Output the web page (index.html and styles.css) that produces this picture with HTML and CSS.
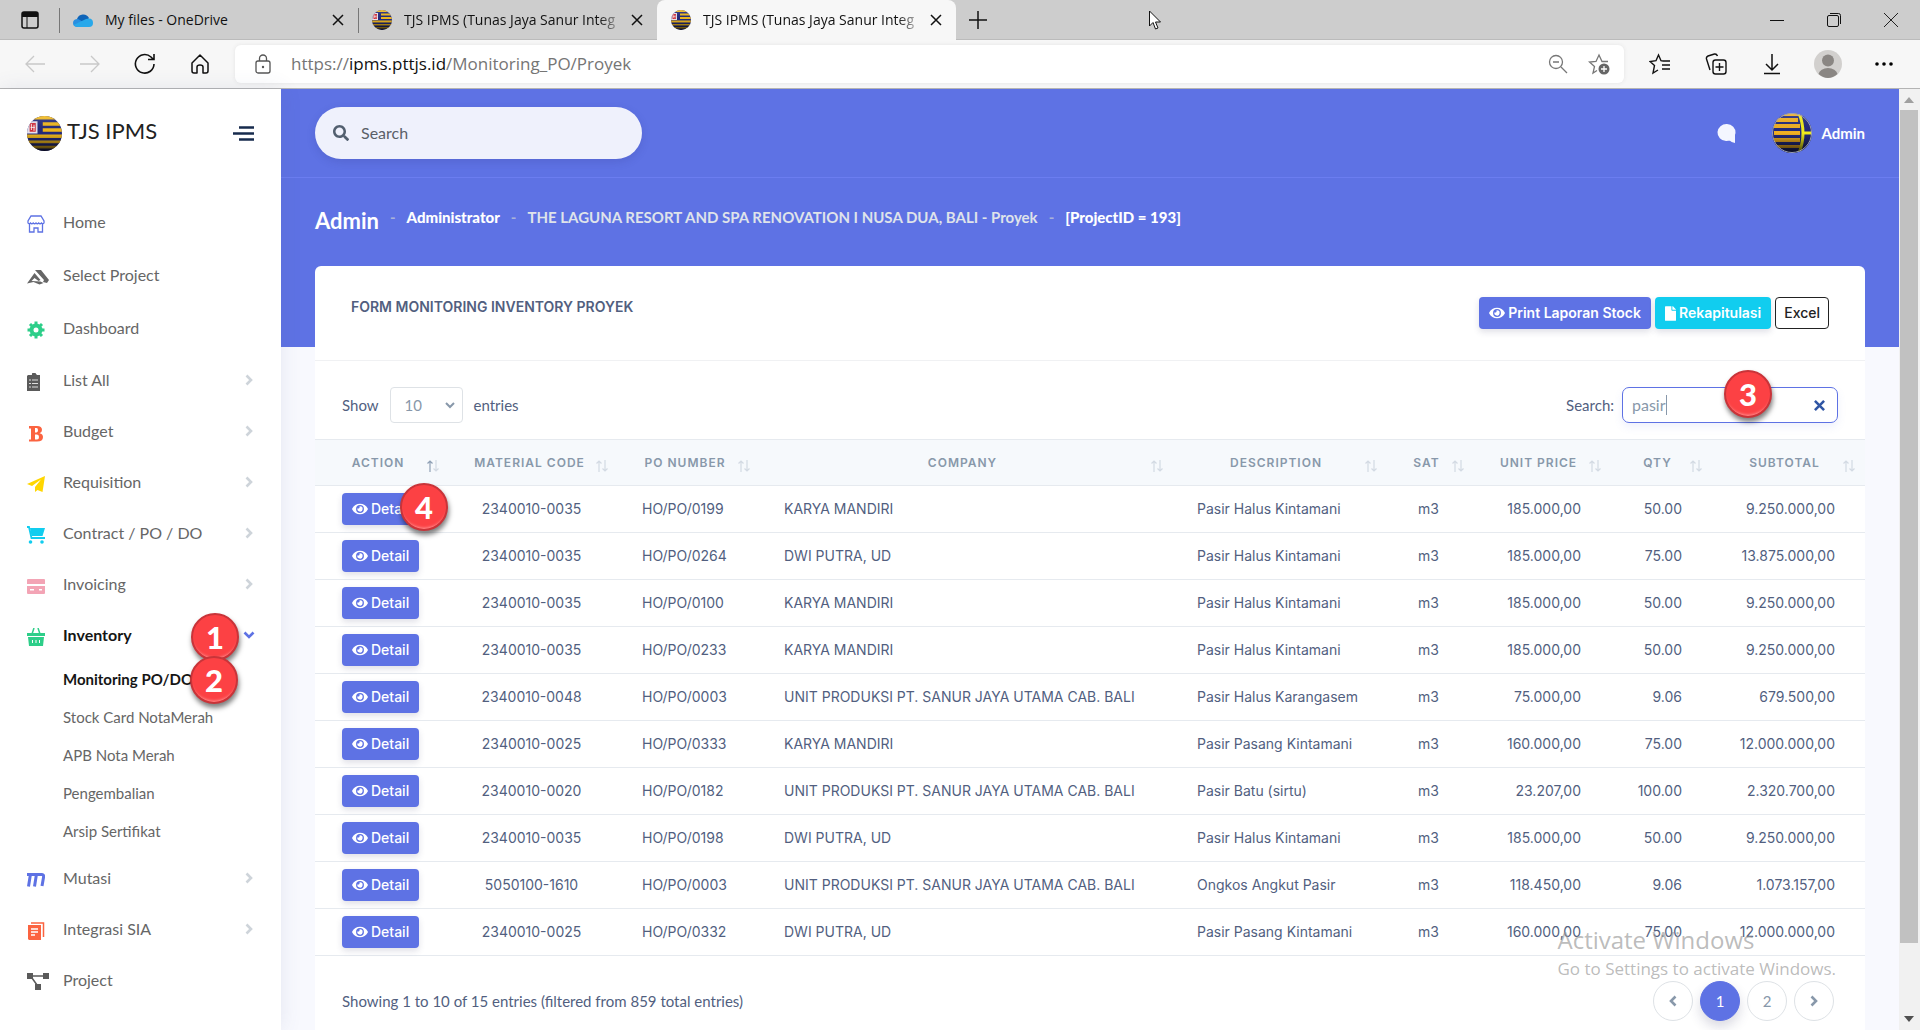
FILE: index.html
```html
<!DOCTYPE html>
<html lang="id">
<head>
<meta charset="utf-8">
<title>TJS IPMS (Tunas Jaya Sanur Integrated)</title>
<link rel="stylesheet" href="styles.css">
</head>
<body>
<svg class="defs" aria-hidden="true">
  <defs>
    <linearGradient id="shade" x1="0" y1="0" x2="0" y2="1"><stop offset="0" stop-color="#fff" stop-opacity=".15"/><stop offset=".5" stop-color="#000" stop-opacity="0"/><stop offset="1" stop-color="#000" stop-opacity=".75"/></linearGradient>
    <clipPath id="ball"><circle cx="20" cy="20" r="20"/></clipPath>
  </defs>
  <symbol id="globe" viewBox="0 0 40 40"><g clip-path="url(#ball)"><path fill="#232a7c" d="M0 0h40v40H0z"/><path fill="#f2b91d" d="M0 0h40v4H0zM18 7h22v4H18zM18 14h22v4H18zM0 21h40v4H0zM0 28h40v3H0zM0 34h40v3H0z"/><path fill="#e8e3ee" d="M0 6h12v14H0z"/><path fill="#d3303d" d="M3 8h7v10H3z"/><path stroke="#fff" d="M5 9v7M8 10v7M4 13h5"/><path fill="url(#shade)" d="M0 0h40v40H0z"/></g></symbol>
  <symbol id="globe2" viewBox="0 0 40 40"><g clip-path="url(#ball)"><path fill="#232a7c" d="M0 0h40v40H0z"/><path fill="#f2b023" d="M0 0h40v3H0zM4 5h22v4H4zM2 11h26v4H2zM2 18h26v4H2zM2 25h26v4H2zM4 32h24v3H4z"/><path fill="none" stroke="#f3ee1c" stroke-width="3" d="M27 0q8 20 0 40M31 20h9"/><path fill="url(#shade)" d="M0 0h40v40H0z"/></g><circle cx="20" cy="20" r="19.500" fill="none" stroke="#9aa0b8"/></symbol>
  <symbol id="eye" viewBox="0 0 576 512"><path fill="currentColor" d="M572.52 241.4C518.29 135.59 410.93 64 288 64S57.68 135.64 3.48 241.41a32.35 32.35 0 0 0 0 29.19C57.71 376.41 165.07 448 288 448s230.32-71.64 284.52-177.41a32.35 32.35 0 0 0 0-29.19zM288 400a144 144 0 1 1 144-144 143.93 143.93 0 0 1-144 144zm0-240a95.31 95.31 0 0 0-25.31 3.79 47.85 47.85 0 0 1-66.9 66.9A95.78 95.78 0 1 0 288 160z"/></symbol>
  <symbol id="close" viewBox="0 0 12 12"><path d="M1 1l10 10M11 1L1 11" fill="none" stroke="currentColor" stroke-width="1.500"/></symbol>
  <symbol id="chev" viewBox="0 0 8 12"><path d="M1.500 1.500L6 6l-4.500 4.500" fill="none" stroke="currentColor" stroke-width="2.600"/></symbol>
  <symbol id="sort" viewBox="0 0 12 12"><path class="up" d="M3 12V1M.5 3.500L3 1l2.500 2.500" fill="none" stroke="currentColor" stroke-width="1.200"/><path d="M9 0v11M6.500 8.500L9 11l2.500-2.500" fill="none" stroke="#d3dae3" stroke-width="1.200"/></symbol>
</svg>

<header class="browser">
  <div class="tabstrip">
    <button class="tab-actions" aria-label="Tab actions"><svg width="18" height="18" viewBox="0 0 18 18"><rect x="1" y="1" width="16" height="16" rx="2" fill="none" stroke="#111" stroke-width="1.500"/><path fill="#111" d="M1 1h16v5H1z"/><path stroke="#111" d="M6 6v11"/></svg></button>
    <div class="tab sep"><svg width="20" height="16" viewBox="0 0 20 16"><path fill="#0f64b8" d="M4 7a6.500 6.500 0 0 1 12-1l-5 7H3z"/><path fill="#2a8fe0" d="M5 15q-5 0-5-4 0-4 5-4l7 4z"/><path fill="#28a8ea" d="M5 15q-3 0-4.500-2L13 7q7-2 7 4 0 4-4 4z"/></svg><span class="tab-title">My files - OneDrive</span><button aria-label="Close tab"><svg width="12" height="12"><use href="#close"/></svg></button></div>
    <div class="tab sep"><svg width="20" height="20"><use href="#globe"/></svg><span class="tab-title fade">TJS IPMS (Tunas Jaya Sanur Integ</span><button aria-label="Close tab"><svg width="12" height="12"><use href="#close"/></svg></button></div>
    <div class="tab active"><svg width="20" height="20"><use href="#globe"/></svg><span class="tab-title fade">TJS IPMS (Tunas Jaya Sanur Integ</span><button aria-label="Close tab"><svg width="12" height="12"><use href="#close"/></svg></button></div>
    <button class="new-tab" aria-label="New tab"><svg width="18" height="18" viewBox="0 0 18 18"><path d="M9 0v18M0 9h18" stroke="#111" stroke-width="1.500"/></svg></button>
    <div class="win-controls">
      <button aria-label="Minimize"><svg width="14" height="14" viewBox="0 0 14 14"><path d="M0 7.500h14" stroke="#111"/></svg></button>
      <button aria-label="Restore"><svg width="14" height="14" viewBox="0 0 14 14"><rect x=".5" y="2.500" width="11" height="11" rx="1.500" fill="none" stroke="#111"/><path d="M3 .5h8.500q2 0 2 2V11" fill="none" stroke="#111"/></svg></button>
      <button aria-label="Close"><svg width="14" height="14" viewBox="0 0 14 14"><path d="M0 0l14 14M14 0L0 14" stroke="#222"/></svg></button>
    </div>
  </div>
  <div class="toolbar">
    <div class="nav-buttons">
      <button aria-label="Back"><svg width="20" height="20" viewBox="0 0 20 20"><path d="M20 10H1M9 2l-8 8 8 8" fill="none" stroke="#c9c9c9" stroke-width="1.300"/></svg></button>
      <button aria-label="Forward"><svg width="20" height="20" viewBox="0 0 20 20"><path d="M0 10h19M11 2l8 8-8 8" fill="none" stroke="#c9c9c9" stroke-width="1.300"/></svg></button>
      <button aria-label="Refresh"><svg width="22" height="22" viewBox="0 0 22 22"><path d="M20 11a9.300 9.300 0 1 1-3-7l2 2M20 1v5.500h-6" fill="none" stroke="#111" stroke-width="1.600"/></svg></button>
      <button aria-label="Home"><svg width="20" height="20" viewBox="0 0 20 20"><path d="M2 9l8-8 8 8v8q0 2-2 2h-3v-6q0-2-3-2t-3 2v6H4q-2 0-2-2z" fill="none" stroke="#111" stroke-width="1.500" stroke-linejoin="round"/></svg></button>
    </div>
    <div class="address">
      <svg width="16" height="20" viewBox="0 0 16 20"><rect x="1" y="7" width="14" height="12" rx="2" fill="none" stroke="#555" stroke-width="1.300"/><path d="M4.500 7V4.500a3.500 3.500 0 0 1 7 0V7" fill="none" stroke="#555" stroke-width="1.300"/><circle cx="8" cy="13" r="1.200" fill="#555"/></svg>
      <span class="url">https://<b>ipms.pttjs.id</b>/Monitoring_PO/Proyek</span>
      <button aria-label="Zoom"><svg width="20" height="20" viewBox="0 0 20 20"><circle cx="8" cy="8" r="6.500" fill="none" stroke="#777" stroke-width="1.300"/><path d="M5 8h6M13 13l6 6" stroke="#777" stroke-width="1.300"/></svg></button>
      <button aria-label="Add favorite"><svg width="22" height="22" viewBox="0 0 22 22"><path d="M20 8.500h-6L11 2 8 8.500 1.500 9l5 4.500L5 20l4-2.500" fill="none" stroke="#777" stroke-width="1.300"/><circle cx="16" cy="16" r="5.500" fill="#666"/><path d="M16 13v6M13 16h6" stroke="#fff" stroke-width="1.300"/></svg></button>
    </div>
    <div class="tools">
      <button aria-label="Favorites"><svg width="22" height="22" viewBox="0 0 22 22"><path d="M14 8l-2-.3L9.500 2 7 7.700 1 8.500l4.500 4L4 20l5-3" fill="none" stroke="#111" stroke-width="1.400"/><path d="M14 8h7M13 12h8M13 16h8" stroke="#111" stroke-width="1.500"/></svg></button>
      <button aria-label="Collections"><svg width="22" height="22" viewBox="0 0 22 22"><rect x="8" y="7" width="13" height="14" rx="2.500" fill="none" stroke="#111" stroke-width="1.400"/><path d="M14.500 10v8M10.500 14h8M5 17L1.500 6q-.6-2 1.500-3L9.500 1q2-.4 3 2" fill="none" stroke="#111" stroke-width="1.400"/></svg></button>
      <button aria-label="Downloads"><svg width="20" height="22" viewBox="0 0 20 22"><path d="M10 1v15M4 11l6 6 6-6M2 20.500h16" fill="none" stroke="#111" stroke-width="1.500"/></svg></button>
      <button aria-label="Profile"><svg width="28" height="28" viewBox="0 0 28 28"><circle cx="14" cy="14" r="14" fill="#d2d0ce"/><circle cx="14" cy="10.500" r="6" fill="#8a8683"/><path d="M4.500 24a9.600 7 0 0 1 19 0Q14 32 4.500 24z" fill="#8a8683"/></svg></button>
      <button aria-label="Settings"><svg width="18" height="4" viewBox="0 0 18 4"><circle cx="2" cy="2" r="1.800"/><circle cx="9" cy="2" r="1.800"/><circle cx="16" cy="2" r="1.800"/></svg></button>
    </div>
  </div>
</header>

<div class="page">
  <aside class="sidebar">
    <div class="brand"><svg width="35" height="35"><use href="#globe"/></svg><span>TJS IPMS</span><button aria-label="Toggle menu"><svg width="21" height="15" viewBox="0 0 21 15"><path d="M6 1.500h15M0 7.500h21M6 13.500h15" stroke="#172b4d" stroke-width="2.500"/></svg></button></div>
    <ul class="links">
      <li><a href="#"><svg viewBox="0 0 18 18"><path d="M4 1h10l3 5v2q-1 1.500-2.500 0-1.500 1.500-2.800 0-1.400 1.500-2.700 0-1.500 1.500-2.800 0-1.500 1.500-2.700 0Q2 9.500 1 8V6zM2.500 9v8h4.500v-4h4v4h4.500V9" fill="none" stroke="#5e72e4" stroke-width="1.300"/></svg>Home</a></li>
      <li><a href="#"><svg class="wide" viewBox="0 0 22 18"><path fill="#666" d="M8 2h6l8 10-2 3-4-1 1-2zM7.500 5l6 7-2 1-4-3-3 3 9 .5 3 1.500-4 1.500-6-2.500L0 15.500z"/></svg>Select Project</a></li>
      <li><a href="#"><svg viewBox="0 0 18 18"><circle cx="9" cy="9" r="4.500" fill="none" stroke="#2dce89" stroke-width="4"/><path d="M9 .5v4M9 14v3.500M.5 9H4M14 9h3.500M3 3l2.500 2.500M15 3l-2.500 2.500M3 15l2.500-2.500M15 15l-2.500-2.500" stroke="#2dce89" stroke-width="3"/></svg>Dashboard</a></li>
    </ul>
    <ul class="groups">
      <li><a href="#"><svg viewBox="0 0 18 18"><path fill="#5a5a5a" d="M1 2h4a2 2 0 0 1 4-1 2 2 0 0 1 1 1h3v16H0V3z"/><path d="M2 7h2M5 7h6M2 10.500h2M5 10.500h6M2 14h2M5 14h6" stroke="#ddd" stroke-width="1.200"/></svg>List All<svg class="caret" viewBox="0 0 8 12"><use href="#chev"/></svg></a></li>
      <li><a href="#"><svg viewBox="0 0 18 18"><path fill="#fb6340" fill-rule="evenodd" d="M2 2h8q5 0 5 4 0 2.500-2.500 3.200Q16 10 16 13q0 4.500-6 4.500H2v-2h2v-11H2zm6 2v4.500h1.500Q11 8 11 6.200 11 4 9.500 4zm0 6.500v5h2q2 0 2-2.500t-2-2.500z"/></svg>Budget<svg class="caret" viewBox="0 0 8 12"><use href="#chev"/></svg></a></li>
      <li><a href="#"><svg viewBox="0 0 18 18"><path fill="#ffd600" d="M18 1l-2.500 16-5-2L8 17v-5l6-7.500L5 11 0 9z"/></svg>Requisition<svg class="caret" viewBox="0 0 8 12"><use href="#chev"/></svg></a></li>
      <li><a href="#"><svg viewBox="0 0 18 18"><path d="M0 1h2l2.500 11H18" fill="none" stroke="#11cdef" stroke-width="1.800"/><path fill="#11cdef" d="M3 2h15l-2.500 8H4.500z"/><circle cx="3.500" cy="16" r="1.800" fill="#11cdef"/><circle cx="15" cy="16" r="1.800" fill="#11cdef"/></svg>Contract / PO / DO<svg class="caret" viewBox="0 0 8 12"><use href="#chev"/></svg></a></li>
      <li><a href="#"><svg viewBox="0 0 18 18"><path fill="#f3a4b5" fill-rule="evenodd" d="M1 2h16q1 0 1 1v4H0V3q0-1 1-1zM0 9h18v7q0 1-1 1H1q-1 0-1-1zm3 3v1.500h4V12zm9 0v1.500h3V12z"/></svg>Invoicing<svg class="caret" viewBox="0 0 8 12"><use href="#chev"/></svg></a></li>
      <li class="open"><a href="#"><svg viewBox="0 0 18 18"><path d="M7 0L5 6M11 0l2 6" stroke="#2dce89" stroke-width="1.500"/><path fill="#2dce89" fill-rule="evenodd" d="M0 5h18v3H0zm1 4h16l-1 9H2zm4 3v3h1v-3zm3.500 0v3h1v-3zm3.500 0v3h1v-3z"/></svg>Inventory<svg class="caret down" viewBox="0 0 8 12"><use href="#chev"/></svg></a><span class="step step-1">1</span>
        <ul class="sub">
          <li class="current"><a href="#">Monitoring PO/DO</a><span class="step step-2">2</span></li>
          <li><a href="#">Stock Card NotaMerah</a></li>
          <li><a href="#">APB Nota Merah</a></li>
          <li><a href="#">Pengembalian</a></li>
          <li><a href="#">Arsip Sertifikat</a></li>
        </ul></li>
      <li><a href="#"><svg viewBox="0 0 18 18"><path d="M0 3.500h15q2 0 1.500 3L15 15M3.500 3L1.500 15.500M9.500 3L7.500 15.500" fill="none" stroke="#5e72e4" stroke-width="3"/></svg>Mutasi<svg class="caret" viewBox="0 0 8 12"><use href="#chev"/></svg></a></li>
      <li><a href="#"><svg viewBox="0 0 18 18"><path d="M4 1h12.500v14" fill="none" stroke="#fb6340" stroke-width="1.500"/><path fill="#fb6340" d="M1 3h13v15H2l-1-1z"/><path d="M4 7h7M4 10h7M4 13h4" stroke="#fff" stroke-width="1.300"/></svg>Integrasi SIA<svg class="caret" viewBox="0 0 8 12"><use href="#chev"/></svg></a></li>
      <li><a href="#"><svg class="wide" viewBox="0 0 22 18"><path fill="#5a5a5a" d="M0 0h6v6H0zM16 0h6v6h-6zM8 11h6v6H8z"/><path d="M6 3h10M5 5l5 7" stroke="#5a5a5a" stroke-width="1.500"/></svg>Project</a></li>
    </ul>
  </aside>

  <main class="main">
    <nav class="topbar">
      <label class="search"><svg width="16" height="16" viewBox="0 0 512 512"><path fill="#525f6f" d="M505 442.700L405.300 343c-4.500-4.500-10.600-7-17-7H372c27.600-35.300 44-79.700 44-128C416 93.100 322.900 0 208 0S0 93.100 0 208s93.100 208 208 208c48.300 0 92.700-16.400 128-44v16.300c0 6.400 2.500 12.500 7 17l99.700 99.700c9.400 9.400 24.600 9.400 33.900 0l28.300-28.300c9.400-9.400 9.400-24.600.1-34zM208 336c-70.700 0-128-57.200-128-128 0-70.700 57.200-128 128-128 70.700 0 128 57.200 128 128 0 70.700-57.200 128-128 128z"/></svg><input type="text" placeholder="Search" aria-label="Search"></label>
      <button class="chat" aria-label="Messages"><svg width="20" height="20" viewBox="0 0 20 20"><path fill="#f4f6ff" d="M10 1a9 8.500 0 1 1-1 17A9 8.500 0 0 1 10 1zM12 16l6-4v8q-3 0-6-3z"/></svg></button>
      <a class="user" href="#"><svg width="40" height="40"><use href="#globe2"/></svg>Admin</a>
    </nav>
    <div class="crumbs"><h1>Admin</h1><span class="dash">-</span><strong>Administrator</strong><span class="dash">-</span><span class="project">THE LAGUNA RESORT AND SPA RENOVATION I NUSA DUA, BALI - Proyek</span><span class="dash">-</span><strong>[ProjectID = 193]</strong></div>

    <section class="card">
      <div class="card-head">
        <h2>FORM MONITORING INVENTORY PROYEK</h2>
        <div class="actions">
          <button class="btn primary bold"><svg width="16" height="14"><use href="#eye"/></svg>Print Laporan Stock</button>
          <button class="btn info bold"><svg width="11" height="15" viewBox="0 0 384 512"><path fill="#fff" d="M224 136V0H24C10.700 0 0 10.700 0 24v464c0 13.300 10.700 24 24 24h336c13.300 0 24-10.700 24-24V160H248c-13.200 0-24-10.800-24-24zm160-14.100v6.100H256V0h6.100c6.400 0 12.500 2.500 17 7l97.900 98c4.500 4.500 7 10.600 7 16.900z"/></svg>Rekapitulasi</button>
          <button class="btn outline">Excel</button>
        </div>
      </div>
      <div class="filters">
        <label class="length">Show <select><option>10</option></select> entries</label>
        <div class="find"><label for="q">Search:</label><div class="find-box"><input id="q" type="text" value="pasir"><button aria-label="Clear"><svg width="11" height="11" viewBox="0 0 12 12"><path d="M1 1l10 10M11 1L1 11" stroke="#2f55a4" stroke-width="2.800"/></svg></button><span class="step step-3">3</span></div></div>
      </div>
      <table>
        <colgroup><col class="c-action"><col class="c-code"><col class="c-po"><col><col class="c-desc"><col class="c-sat"><col class="c-price"><col class="c-qty"><col class="c-sub"></colgroup>
        <thead><tr>
          <th class="sorted">Action<svg><use href="#sort"/></svg></th><th>Material Code<svg><use href="#sort"/></svg></th><th>PO Number<svg><use href="#sort"/></svg></th><th>Company<svg><use href="#sort"/></svg></th><th>Description<svg><use href="#sort"/></svg></th><th>Sat<svg><use href="#sort"/></svg></th><th>Unit Price<svg><use href="#sort"/></svg></th><th>Qty<svg><use href="#sort"/></svg></th><th>Subtotal<svg><use href="#sort"/></svg></th>
        </tr></thead>
        <tbody>
          <tr><td><span class="anchor"><button class="btn primary"><svg width="16" height="14"><use href="#eye"/></svg>Detail</button><span class="step step-4">4</span></span></td><td>2340010-0035</td><td>HO/PO/0199</td><td>KARYA MANDIRI</td><td>Pasir Halus Kintamani</td><td>m3</td><td>185.000,00</td><td>50.00</td><td>9.250.000,00</td></tr>
          <tr><td><button class="btn primary"><svg width="16" height="14"><use href="#eye"/></svg>Detail</button></td><td>2340010-0035</td><td>HO/PO/0264</td><td>DWI PUTRA, UD</td><td>Pasir Halus Kintamani</td><td>m3</td><td>185.000,00</td><td>75.00</td><td>13.875.000,00</td></tr>
          <tr><td><button class="btn primary"><svg width="16" height="14"><use href="#eye"/></svg>Detail</button></td><td>2340010-0035</td><td>HO/PO/0100</td><td>KARYA MANDIRI</td><td>Pasir Halus Kintamani</td><td>m3</td><td>185.000,00</td><td>50.00</td><td>9.250.000,00</td></tr>
          <tr><td><button class="btn primary"><svg width="16" height="14"><use href="#eye"/></svg>Detail</button></td><td>2340010-0035</td><td>HO/PO/0233</td><td>KARYA MANDIRI</td><td>Pasir Halus Kintamani</td><td>m3</td><td>185.000,00</td><td>50.00</td><td>9.250.000,00</td></tr>
          <tr><td><button class="btn primary"><svg width="16" height="14"><use href="#eye"/></svg>Detail</button></td><td>2340010-0048</td><td>HO/PO/0003</td><td>UNIT PRODUKSI PT. SANUR JAYA UTAMA CAB. BALI</td><td>Pasir Halus Karangasem</td><td>m3</td><td>75.000,00</td><td>9.06</td><td>679.500,00</td></tr>
          <tr><td><button class="btn primary"><svg width="16" height="14"><use href="#eye"/></svg>Detail</button></td><td>2340010-0025</td><td>HO/PO/0333</td><td>KARYA MANDIRI</td><td>Pasir Pasang Kintamani</td><td>m3</td><td>160.000,00</td><td>75.00</td><td>12.000.000,00</td></tr>
          <tr><td><button class="btn primary"><svg width="16" height="14"><use href="#eye"/></svg>Detail</button></td><td>2340010-0020</td><td>HO/PO/0182</td><td>UNIT PRODUKSI PT. SANUR JAYA UTAMA CAB. BALI</td><td>Pasir Batu (sirtu)</td><td>m3</td><td>23.207,00</td><td>100.00</td><td>2.320.700,00</td></tr>
          <tr><td><button class="btn primary"><svg width="16" height="14"><use href="#eye"/></svg>Detail</button></td><td>2340010-0035</td><td>HO/PO/0198</td><td>DWI PUTRA, UD</td><td>Pasir Halus Kintamani</td><td>m3</td><td>185.000,00</td><td>50.00</td><td>9.250.000,00</td></tr>
          <tr><td><button class="btn primary"><svg width="16" height="14"><use href="#eye"/></svg>Detail</button></td><td>5050100-1610</td><td>HO/PO/0003</td><td>UNIT PRODUKSI PT. SANUR JAYA UTAMA CAB. BALI</td><td>Ongkos Angkut Pasir</td><td>m3</td><td>118.450,00</td><td>9.06</td><td>1.073.157,00</td></tr>
          <tr><td><button class="btn primary"><svg width="16" height="14"><use href="#eye"/></svg>Detail</button></td><td>2340010-0025</td><td>HO/PO/0332</td><td>DWI PUTRA, UD</td><td>Pasir Pasang Kintamani</td><td>m3</td><td>160.000,00</td><td>75.00</td><td>12.000.000,00</td></tr>
        </tbody>
      </table>
      <div class="card-foot">
        <span>Showing 1 to 10 of 15 entries (filtered from 859 total entries)</span>
        <div class="pager"><button aria-label="Previous"><svg class="flip" width="8" height="12"><use href="#chev"/></svg></button><button class="on">1</button><button>2</button><button aria-label="Next"><svg width="8" height="12"><use href="#chev"/></svg></button></div>
      </div>
    </section>
  </main>

  <div class="scrollbar"><svg width="10" height="6" viewBox="0 0 10 6"><path fill="#a0a0a0" d="M0 6l5-6 5 6z"/></svg><div class="thumb"></div><svg width="10" height="6" viewBox="0 0 10 6"><path fill="#505050" d="M0 0l5 6 5-6z"/></svg></div>
</div>

<div class="watermark"><p>Activate Windows</p><small>Go to Settings to activate Windows.</small></div>
<svg class="cursor" width="12" height="20" viewBox="0 0 12 20"><path d="M.5 1v15l3.500-3.500L6.500 19l2.500-1-2.500-6h5z" fill="#fff" stroke="#111"/></svg>
</body>
</html>
```
FILE: styles.css
```css
* { box-sizing: border-box; }
html, body { height: 100%; }
body {
  margin: 0;
  display: flex;
  flex-direction: column;
  overflow: hidden;
  position: relative;
  background: #f8f9fe;
  color: #525f7f;
  font: 15px/20px Lato, sans-serif;
}
button { font: inherit; color: inherit; background: none; border: 0; padding: 0; }
a { color: inherit; text-decoration: none; }
ul { list-style: none; margin: 0; padding: 0; }
svg { flex: none; display: block; }
.defs { position: absolute; width: 0; height: 0; }

/* Browser frame */
.browser { font: 14px/20px "Open Sans", sans-serif; color: #111; }
.tabstrip { display: flex; height: 40px; background: #cdcdcd; border-bottom: 1px solid #bbb; }
.tab-actions { width: 59px; display: flex; align-items: center; justify-content: center; }
.tab { width: 299px; height: 40px; padding: 0 14px; display: flex; align-items: center; gap: 12px; position: relative; }
.tab.sep::before { content: ""; position: absolute; left: 0; top: 8px; bottom: 7px; width: 1px; background: #777; }
.tab.active { background: #f7f7f7; border-radius: 8px 8px 0 0; }
.tab-title { flex: 1; min-width: 0; overflow: hidden; white-space: nowrap; }
.fade { -webkit-mask-image: linear-gradient(90deg, #000 88%, transparent); mask-image: linear-gradient(90deg, #000 88%, transparent); }
.tab button { margin-left: -6px; }
.new-tab { width: 44px; display: flex; align-items: center; justify-content: center; }
.win-controls { margin-left: auto; padding-right: 1px; display: flex; }
.win-controls button { width: 57px; display: flex; align-items: center; justify-content: center; }
.toolbar { display: flex; align-items: center; height: 49px; padding-left: 7px; background: #f7f7f7; border-bottom: 1px solid #b4b4b4; }
.nav-buttons, .tools { display: flex; }
.nav-buttons button, .tools button { width: 55px; display: flex; align-items: center; justify-content: center; }
.tools { padding: 0 8px; }
.tools button { width: 56px; }
.address { flex: 1; height: 38px; margin-left: 8px; padding: 0 14px 0 20px; display: flex; align-items: center; gap: 20px; background: #fff; border-radius: 6px; box-shadow: 0 0 4px #e4e4e4; }
.url { flex: 1; font-size: 17px; color: #757575; }
.url b { font-weight: 400; color: #111; }

/* Page frame */
.page { flex: 1; min-height: 0; display: flex; }
.sidebar { width: 281px; background: #fff; box-shadow: 0 0 20px rgba(80, 90, 140, .12); position: relative; z-index: 1; }
.brand { display: flex; align-items: center; gap: 5px; height: 106px; padding: 0 27px 18px; font-size: 22px; color: #222; }
.brand span { padding-bottom: 4px; }
.brand button { margin-left: auto; }
.sidebar li { position: relative; }
.sidebar a { display: flex; align-items: center; padding: 0 27px; color: #666; font-size: 16px; }
.sidebar a > svg { width: 18px; height: 18px; margin-right: 18px; position: relative; top: 2px; }
.sidebar a > svg.wide { width: 22px; margin-right: 14px; }
.sidebar a > svg.caret { width: 8px; height: 12px; margin: 0 1px 0 auto; top: 0; color: #ced4da; }
.sidebar a > svg.down { transform: rotate(90deg); color: #5e72e4; }
.links a { height: 53px; }
.groups > li > a { height: 51px; }
.sub { padding-bottom: 2px; }
.sidebar .sub a { height: 38px; padding-left: 63px; font-size: 15px; }
.sidebar .open > a, .sidebar .current a { color: #151515; font-weight: 700; }

.main { flex: 1; min-width: 0; display: flex; flex-direction: column; padding: 0 34px; background: linear-gradient(#5e72e4 258px, #f8f9fe 258px); }
.topbar { flex: none; display: flex; align-items: center; height: 89px; margin: 0 -34px; padding: 0 34px; border-bottom: 1px solid #6b7df0; }
.search { display: flex; align-items: center; gap: 12px; width: 327px; height: 52px; padding: 0 18px; border-radius: 26px; background: #eff1fc; box-shadow: 0 3px 8px rgba(50, 60, 140, .2); }
.search input { flex: 1; min-width: 0; border: 0; padding: 0; background: none; font: inherit; font-size: 16px; }
.search input::placeholder { color: #5a5f68; opacity: 1; }
.chat { margin-left: auto; margin-right: 35px; }
.user { display: flex; align-items: center; gap: 9px; color: #fff; font-weight: 700; }
.crumbs { flex: none; display: flex; align-items: center; gap: 11px; height: 88px; padding-bottom: 10px; color: #dfe3ea; font-size: 15px; font-weight: 700; white-space: nowrap; }
.crumbs strong, .crumbs h1 { color: #fff; }
.crumbs h1 { margin: 0; padding-top: 8px; font-size: 22px; line-height: 24px; }
.dash { color: #a9b2d8; }

/* Card */
.card { flex: 1; background: #fff; border-radius: 6px 6px 0 0; }
.card-head { display: flex; justify-content: space-between; height: 95px; padding: 31px 36px 0; border-bottom: 1px solid #f0f1f3; }
.card-head h2 { margin: 0; font: 600 14px/20px Inter, sans-serif; }
.actions { display: flex; gap: 4px; }
.btn { display: inline-flex; align-items: center; gap: 3px; height: 32px; padding: 0 10px; border: 1px solid #222; border-radius: 4px; font: 500 14px/20px Inter, sans-serif; color: #222; white-space: nowrap; }
.outline { padding: 0 8px; }
.primary, .info { color: #fff; border: 0; box-shadow: 0 3px 6px rgba(50, 50, 93, .15); }
.primary { background: #5e72e4; }
.info { background: #11cdef; }
.bold { font-weight: 600; }
.filters { display: flex; justify-content: space-between; align-items: center; height: 78px; padding: 10px 27px 0; }
.length { display: flex; align-items: center; gap: 11px; }
select { appearance: none; width: 73px; height: 36px; padding: 0 14px; border: 1px solid #dee2e6; border-radius: 4px; color: #8898aa; font: inherit; background: #fff url("data:image/svg+xml,%3Csvg xmlns='http://www.w3.org/2000/svg' width='10' height='7'%3E%3Cpath d='M1 1l4 4 4-4' fill='none' stroke='%238898aa' stroke-width='2'/%3E%3C/svg%3E") no-repeat right 7px center; }
.find { display: flex; align-items: center; gap: 8px; }
.find-box { position: relative; display: flex; align-items: center; justify-content: space-between; width: 216px; height: 36px; padding: 0 12px 0 9px; border: 1px solid #5e72e4; border-radius: 7px; box-shadow: 0 4px 8px rgba(94, 114, 228, .1); }
.find-box input { field-sizing: content; min-width: 0; border: 0; border-right: 1px solid #8898aa; padding: 0; outline: 0; font: inherit; font-size: 16px; color: #8898aa; }

table { width: 100%; table-layout: fixed; border-collapse: collapse; font: 14px/20px Inter, sans-serif; }
.c-action { width: 134px; } .c-code { width: 169px; } .c-po { width: 142px; } .c-desc { width: 214px; }
.c-sat { width: 87px; } .c-price { width: 137px; } .c-qty { width: 101px; } .c-sub { width: 153px; }
th { position: relative; height: 46px; padding: 0 32px 0 24px; border: solid #e6eaef; border-width: 1px 0; background: #f6f9fc; color: #8898aa; font-size: 12px; font-weight: 600; letter-spacing: 1px; text-transform: uppercase; white-space: nowrap; }
th svg { position: absolute; right: 10px; top: 20px; width: 12px; height: 12px; color: #d3dae3; }
th.sorted svg { color: #8fa0b5; }
td { height: 47px; padding: 0 0 0 24px; border-bottom: 1px solid #e6eaef; white-space: nowrap; }
td:first-child { padding-left: 27px; }
td:nth-child(2), td:nth-child(6) { padding: 0 4px 0 0; text-align: center; }
td:nth-child(n+7) { padding: 0 30px 0 0; text-align: right; }
td .btn { vertical-align: middle; }
.anchor { position: relative; display: inline-block; }
.card-foot { display: flex; justify-content: space-between; align-items: center; padding: 25px 31px 8px 27px; }
.pager { display: flex; gap: 7px; }
.pager button { width: 40px; height: 40px; display: flex; align-items: center; justify-content: center; border: 1px solid #dee2e6; border-radius: 50%; color: #8898aa; }
.pager .on { background: #5e72e4; border-color: #5e72e4; color: #fff; box-shadow: 0 6px 12px rgba(50, 50, 93, .18); }
.flip { transform: scaleX(-1); }

.scrollbar { width: 21px; padding: 8px 2px 8px 1px; display: flex; flex-direction: column; align-items: center; background: #f1f1f1; }
.thumb { width: 100%; flex: 0 0 90%; margin: 7px 0 auto; background: #c1c1c1; }

/* Numbered callouts */
.step { position: absolute; z-index: 2; width: 48px; height: 48px; border: 2px solid #c93439; border-radius: 50%; background: #fc4144; color: #fff; text-align: center; font: 900 31px/44px Lato, sans-serif; box-shadow: 1px 4px 5px rgba(0, 0, 0, .5), inset 0 -4px 3px -3px #ff9a9a; }
.step-1 { left: 191px; top: 4px; }
.step-2 { left: 190px; top: -4px; }
.step-3 { left: 101px; top: -18px; }
.step-4 { left: 58px; top: -10px; }

.watermark { position: absolute; right: 84px; bottom: 48px; color: rgba(150, 150, 150, .65); font: 24px/32px "Open Sans", sans-serif; z-index: 5; }
.watermark p { margin: 0; }
.watermark small { display: block; font-size: 17px; line-height: 26px; }
.cursor { position: absolute; left: 1149px; top: 10px; }
```
